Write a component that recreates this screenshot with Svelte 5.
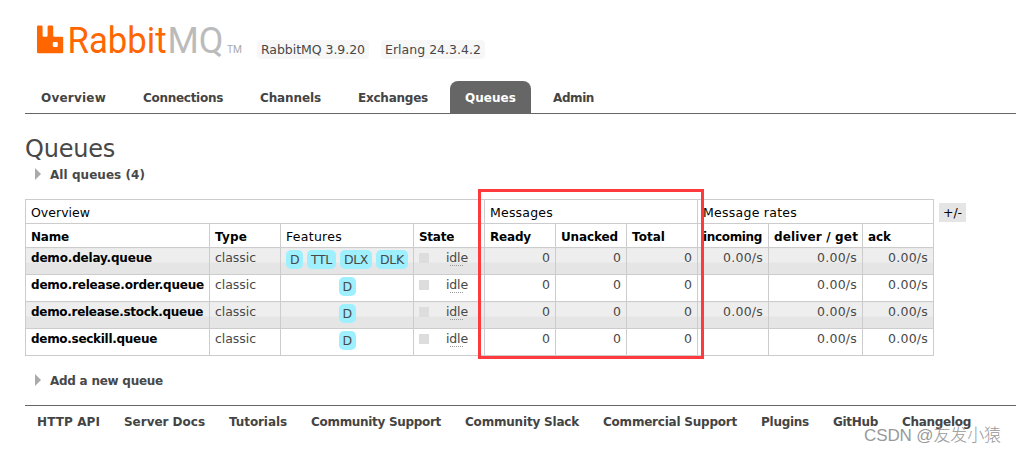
<script>
  const tabs = [
    { label: 'Overview', w: 65 },
    { label: 'Connections', w: 80 },
    { label: 'Channels', w: 61 },
    { label: 'Exchanges', w: 70 },
    { label: 'Queues', w: 51, active: true },
    { label: 'Admin', w: 41 }
  ];
  const columns = [184, 71, 133, 71, 71, 71, 71, 71, 94, 71];
  const rows = [
    { name: 'demo.delay.queue', w: 121, features: ['D', 'TTL', 'DLX', 'DLK'], incoming: '0.00/s' },
    { name: 'demo.release.order.queue', w: 173, features: ['D'], incoming: '' },
    { name: 'demo.release.stock.queue', w: 172, features: ['D'], incoming: '0.00/s' },
    { name: 'demo.seckill.queue', w: 126, features: ['D'], incoming: '' }
  ];
  const featureWidth = { D: 9, TTL: 21, DLX: 24, DLK: 24 };
  const links = [
    { label: 'HTTP API', w: 63 },
    { label: 'Server Docs', w: 81 },
    { label: 'Tutorials', w: 58 },
    { label: 'Community Support', w: 130 },
    { label: 'Community Slack', w: 114 },
    { label: 'Commercial Support', w: 134 },
    { label: 'Plugins', w: 48 },
    { label: 'GitHub', w: 45 },
    { label: 'Changelog', w: 69 }
  ];

  // Tracks a label so that it takes exactly the given width.
  function track(node, width) {
    const natural = node.getBoundingClientRect().width;
    const gap = (width - natural) / node.textContent.length;
    node.style.letterSpacing = `${gap}px`;
  }
</script>

{#snippet t(text, w)}<span class="t" use:track={w}>{text}</span>{/snippet}

<div class="page">
  <header>
    <svg class="logo" width="208" height="36" viewBox="0 0 208 36">
      <path fill="#f60" d="M1.200 0.500h3.200q1.200 0 1.200 1.200v8.800q0 1.200 1.200 1.200h2.600q1.200 0 1.200-1.200v-8.800q0-1.200 1.200-1.200h3.200q1.200 0 1.200 1.200v8.800q0 1.200 1.200 1.200h7.600q1.200 0 1.200 1.200v14.200q0 1.200-1.200 1.200H1.200Q0 28.300 0 27.100V1.700Q0 0.500 1.200 0.500z" />
      <rect x="15.800" y="17" width="5" height="5" rx="1.200" fill="#fff" />
      <text class="brand" x="30.500" y="28" textLength="99" lengthAdjust="spacingAndGlyphs" fill="#f60">Rabbit</text>
      <text class="brand" x="130.500" y="28" textLength="56" lengthAdjust="spacingAndGlyphs" fill="#bbb">MQ</text>
      <text class="tm" x="190" y="28" textLength="15" lengthAdjust="spacingAndGlyphs" fill="#aaa">TM</text>
    </svg>
    <span class="version">{@render t('RabbitMQ 3.9.20', 104)}</span>
    <span class="version">{@render t('Erlang 24.3.4.2', 96)}</span>
  </header>

  <nav>
    {#each tabs as tab}
      <div class="tab" class:active={tab.active}>{@render t(tab.label, tab.w)}</div>
    {/each}
  </nav>

  <main>
    <h1>{@render t('Queues', 90)}</h1>
    <h2 class="all"><i class="arrow"></i>{@render t('All queues (4)', 95)}</h2>

    <div class="listing">
      <table>
        <colgroup>
          {#each columns as width}<col style:width="{width}px" />{/each}
        </colgroup>
        <thead>
          <tr class="groups">
            <th colspan="4">{@render t('Overview', 59)}</th>
            <th colspan="3">{@render t('Messages', 63)}</th>
            <th colspan="3">{@render t('Message rates', 94)}</th>
          </tr>
          <tr>
            <th>{@render t('Name', 38)}</th>
            <th>{@render t('Type', 32)}</th>
            <th class="plain">{@render t('Features', 56)}</th>
            <th>{@render t('State', 35)}</th>
            <th>{@render t('Ready', 41)}</th>
            <th>{@render t('Unacked', 57)}</th>
            <th>{@render t('Total', 33)}</th>
            <th>{@render t('incoming', 59)}</th>
            <th>{@render t('deliver / get', 84)}</th>
            <th>{@render t('ack', 23)}</th>
          </tr>
        </thead>
        <tbody>
          {#each rows as row, i}
            <tr class:alt={i % 2 === 0}>
              <td class="name">{@render t(row.name, row.w)}</td>
              <td>{@render t('classic', 41)}</td>
              <td>
                <div class="features">
                  {#each row.features as f}<span class="feature">{@render t(f, featureWidth[f])}</span>{/each}
                </div>
              </td>
              <td>
                <div class="state"><i class="square"></i><span class="idle">{@render t('idle', 22)}</span></div>
              </td>
              <td class="num">0</td>
              <td class="num">0</td>
              <td class="num">0</td>
              <td class="num">{#if row.incoming}{@render t(row.incoming, 40)}{/if}</td>
              <td class="num">{@render t('0.00/s', 40)}</td>
              <td class="num">{@render t('0.00/s', 40)}</td>
            </tr>
          {/each}
        </tbody>
      </table>
      <span class="toggle">{@render t('+/-', 19)}</span>
      <div class="highlight"></div>
    </div>

    <h2 class="add"><i class="arrow"></i>{@render t('Add a new queue', 113)}</h2>
  </main>

  <footer>
    {#each links as link}
      {@render t(link.label, link.w)}
    {/each}
  </footer>
  <div class="watermark">{@render t('CSDN @友发小猿', 137)}</div>
</div>

<style>
  :global(body) {
    background: #fff;
  }
  .page {
    position: relative;
    box-sizing: border-box;
    width: 1016px;
    height: 454px;
    padding-left: 25px;
    overflow: hidden;
    font: 12.500px/16px "DejaVu Sans", Verdana, sans-serif;
    color: #484848;
  }
  .t {
    display: inline-block;
    white-space: pre;
  }
  header {
    display: flex;
    align-items: flex-start;
    height: 56px;
    padding: 25px 0 0 12px;
  }
  .logo {
    display: block;
    margin-right: 12px;
    overflow: visible;
  }
  .brand {
    font: 400 37px Roboto, sans-serif;
  }
  .tm {
    font: 10px Roboto, sans-serif;
  }
  .version {
    box-sizing: border-box;
    height: 19px;
    margin: 15px 12px 0 0;
    padding: 2px 4px 1px;
    border-radius: 4px;
    background: #f7f7f7;
  }
  nav {
    display: flex;
    gap: 7px;
    height: 32px;
    padding-left: 1px;
    border-bottom: 1px solid #666;
  }
  .tab {
    box-sizing: border-box;
    height: 32px;
    padding: 9px 15px 0;
    border-radius: 8px 8px 0 0;
    font-size: 12px;
    font-weight: bold;
    color: #444;
  }
  .tab.active {
    background: #666;
    color: #fff;
  }
  h1,
  h2 {
    margin: 0;
    font-weight: normal;
  }
  h1 {
    height: 30px;
    padding-top: 20px;
    font-size: 24px;
    line-height: 30px;
  }
  h2 {
    display: flex;
    align-items: center;
    gap: 9px;
    height: 18px;
    padding-left: 10px;
    font-size: 12px;
    font-weight: bold;
  }
  .all {
    margin: 2px 0 15px;
  }
  .add {
    margin-top: 16px;
  }
  .arrow {
    width: 0;
    height: 0;
    margin-bottom: 2px;
    border: solid transparent;
    border-width: 6px 0 6px 6px;
    border-left-color: #aaa;
  }
  .listing {
    position: relative;
    display: flex;
    align-items: flex-start;
    gap: 5px;
  }
  table {
    flex: none;
    width: 909px;
    border-collapse: collapse;
    table-layout: fixed;
  }
  th,
  td {
    box-sizing: border-box;
    padding: 0 5px;
    border: 1px solid #ccc;
    text-align: left;
    white-space: nowrap;
  }
  th {
    height: 24px;
    padding-top: 3px;
    font-size: 12px;
    color: #000;
    vertical-align: top;
    line-height: 20px;
  }
  .groups th,
  .plain {
    font-size: 12.500px;
    font-weight: normal;
  }
  td {
    height: 27px;
    padding-top: 2px;
    vertical-align: top;
  }
  .alt td {
    background: linear-gradient(#eee 0 54%, #e5e5e5 54%);
  }
  .name {
    font-size: 12px;
    font-weight: bold;
    color: #000;
  }
  .num {
    text-align: right;
  }
  .features {
    display: flex;
    justify-content: center;
    gap: 4px;
  }
  .feature {
    box-sizing: border-box;
    height: 19px;
    padding: 2px 4px 1px;
    border-radius: 5px;
    background: #9ef0ff;
  }
  .state {
    display: flex;
    gap: 17px;
  }
  .square {
    width: 10px;
    height: 10px;
    margin-top: 3px;
    background: #ddd;
  }
  .idle {
    display: flex;
    flex-direction: column;
    height: 16px;
  }
  .idle::after {
    content: "";
    width: 14px;
    height: 1px;
    margin: -1px 0 0 4px;
    background: repeating-linear-gradient(90deg, #999 0 1px, transparent 1px 2px);
  }
  .toggle {
    box-sizing: border-box;
    height: 19px;
    margin-top: 4px;
    padding: 2px 4px 1px;
    background: #e5e5e5;
    color: #000;
  }
  .highlight {
    position: absolute;
    left: 453px;
    top: -10px;
    box-sizing: border-box;
    width: 226px;
    height: 170px;
    border: 3px solid #ff3a3e;
  }
  footer {
    display: flex;
    gap: 24px;
    margin-top: 15px;
    padding: 8px 0 0 12px;
    border-top: 1px solid #666;
    font-size: 12px;
    font-weight: bold;
    color: #444;
  }
  .watermark {
    position: absolute;
    left: 864px;
    top: 425px;
    font: 300 17px/22px "Liberation Sans", "Noto Sans CJK SC", sans-serif;
    color: #999;
  }
</style>
